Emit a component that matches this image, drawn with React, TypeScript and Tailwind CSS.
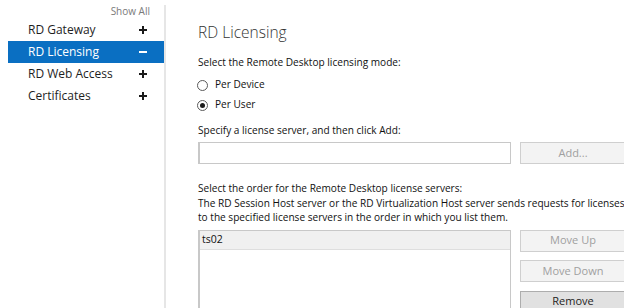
import React from 'react'

const font = { fontFamily: '"Open Sans", "Noto Sans", sans-serif' }

const navItems = [
  { label: 'RD Gateway', open: false },
  { label: 'RD Licensing', open: true },
  { label: 'RD Web Access', open: false },
  { label: 'Certificates', open: false },
]

function Radio({ checked, label }: { checked?: boolean; label: string }) {
  return (
    <div className="flex items-center h-[20px]">
      <span className="w-[11px] h-[11px] rounded-full border border-[#5a5a5a] bg-white flex items-center justify-center ml-[-1px]">
        {checked && <span className="w-[5px] h-[5px] rounded-full bg-[#1a1a1a]" />}
      </span>
      <span className="ml-[7px]">{label}</span>
    </div>
  )
}

function SideButton({ label, pressed }: { label: string; pressed?: boolean }) {
  return (
    <div
      className={
        'w-[106px] h-[22px] flex items-center justify-center border text-[11px] ' +
        (pressed
          ? 'bg-[#e1e1e1] border-[#adadad] text-[#1e1e1e]'
          : 'bg-[#f3f3f3] border-[#cfcfcf] text-[#a0a0a0]')
      }
    >
      {label}
    </div>
  )
}

export default function App() {
  return (
    <div className="w-[624px] h-[308px] overflow-hidden bg-white flex text-[10.1px] text-[#111111]" style={font}>
      {/* left nav */}
      <div className="w-[164px] shrink-0 pl-[8px] pt-[5px]">
        <div className="h-[13px] flex justify-end pr-[14px] text-[10px] leading-[13px] text-[#7a7a7a]">Show All</div>
        <div className="h-[1px]" />
        {navItems.map((item) => (
          <div
            key={item.label}
            className={
              'h-[22px] flex items-center justify-between pl-[20px] pr-[17px] text-[12px] ' +
              (item.open ? 'bg-[#0a6fc2] text-white' : 'text-[#1e1e1e]')
            }
          >
            <span>{item.label}</span>
            {item.open ? (
              <span className="w-[8px] h-[2px] bg-white" />
            ) : (
              <span className="relative w-[8px] h-[8px]">
                <span className="absolute left-0 top-[3px] w-[8px] h-[2px] bg-[#1a1a1a]" />
                <span className="absolute left-[3px] top-0 w-[2px] h-[8px] bg-[#1a1a1a]" />
              </span>
            )}
          </div>
        ))}
      </div>

      {/* separator */}
      <div className="w-[2px] shrink-0 mt-[5px] bg-[#e6e6e6]" />

      {/* content */}
      <div className="flex-1 pl-[32px] pt-[20px] whitespace-nowrap">
        <div className="text-[15.5px] font-light leading-[24px] text-[#333333]">RD Licensing</div>

        <div className="mt-[11px] leading-[15px]">Select the Remote Desktop licensing mode:</div>
        <div className="mt-[5px]">
          <Radio label="Per Device" />
          <Radio label="Per User" checked />
        </div>

        <div className="mt-[8px] leading-[15px]">Specify a license server, and then click Add:</div>
        <div className="mt-[4px] flex gap-[9px]">
          <div className="w-[313px] h-[22px] border border-[#c8c8c8] border-l-2 bg-white" />
          <SideButton label="Add..." />
        </div>

        <div className="mt-[17px] leading-[14.5px]">
          <div>Select the order for the Remote Desktop license servers:</div>
          <div>The RD Session Host server or the RD Virtualization Host server sends requests for licenses</div>
          <div>to the specified license servers in the order in which you list them.</div>
        </div>

        <div className="mt-[5px] flex gap-[9px]">
          <div className="w-[313px] h-[90px] border border-[#c8c8c8] border-l-2 bg-white">
            <div className="h-[19px] flex items-center pl-[2px] bg-[#f0f0f0] border-b border-[#dedede] text-[10.5px]">ts02</div>
          </div>
          <div className="flex flex-col gap-[8.5px]">
            <SideButton label="Move Up" />
            <SideButton label="Move Down" />
            <SideButton label="Remove" pressed />
          </div>
        </div>
      </div>
    </div>
  )
}
